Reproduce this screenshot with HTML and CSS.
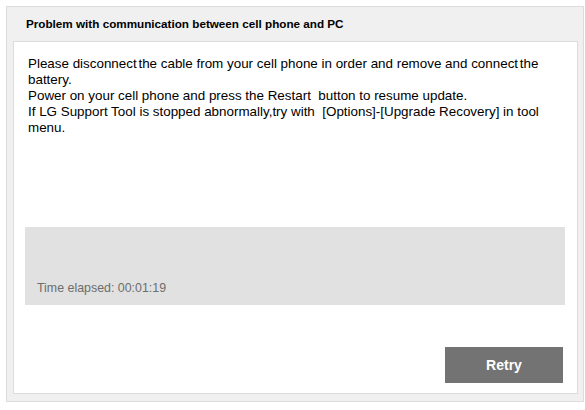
FILE: index.html
```html
<!DOCTYPE html>
<html>
<head>
<meta charset="utf-8">
<link rel="stylesheet" href="styles.css">
</head>
<body>
<div class="dialog">
  <div class="title">Problem with communication between cell phone and PC</div>
  <div class="content">
    <div class="message">Please disconnect<span class="tight"> </span>the cable from your cell phone in order and remove and connect<span class="tight"> </span>the<br>battery.<br>Power on your cell phone and press the Restart&nbsp; button to resume update.<br>If LG Support Tool is stopped abnormally,try with&nbsp; [Options]-[Upgrade Recovery] in tool<br>menu.</div>
    <div class="progress">
      <div class="elapsed">Time elapsed: 00:01:19</div>
    </div>
    <div class="actions">
      <button class="retry">Retry</button>
    </div>
  </div>
</div>
</body>
</html>
```
FILE: styles.css
```css
html, body {
  margin: 0;
  padding: 0;
  background: #ffffff;
}
body {
  padding: 6px 2px 0 6px;
  font-family: "Liberation Sans", Arial, sans-serif;
}
.dialog {
  box-sizing: border-box;
  width: 578px;
  height: 396px;
  background: #f0f0f0;
  border: 1px solid #dcdcdc;
  display: flex;
  flex-direction: column;
  padding: 0 5px 7px 6px;
}
.title {
  height: 34px;
  box-sizing: border-box;
  padding: 10px 0 0 13px;
  font-size: 11.7px;
  font-weight: bold;
  color: #000;
}
.content {
  flex: 1;
  background: #fff;
  border: 1px solid #dcdcdc;
  display: flex;
  flex-direction: column;
  padding: 14px 12px 0 11px;
}
.message {
  font-size: 13.4px;
  line-height: 16px;
  color: #000;
  padding-left: 3px;
  height: 171px;
}
.tight {
  letter-spacing: -2px;
}
.progress {
  height: 78px;
  background: #e1e1e1;
  display: flex;
  align-items: flex-end;
  box-sizing: border-box;
  padding: 0 0 10px 12px;
}
.elapsed {
  font-size: 12.4px;
  line-height: 14px;
  color: #6d6d6d;
}
.actions {
  display: flex;
  justify-content: flex-end;
  padding-top: 42px;
  padding-right: 2px;
}
.retry {
  width: 118px;
  height: 36px;
  border: none;
  background: #737373;
  color: #fff;
  font-family: "Liberation Sans", Arial, sans-serif;
  font-size: 14px;
  font-weight: bold;
  padding: 0;
}
```
